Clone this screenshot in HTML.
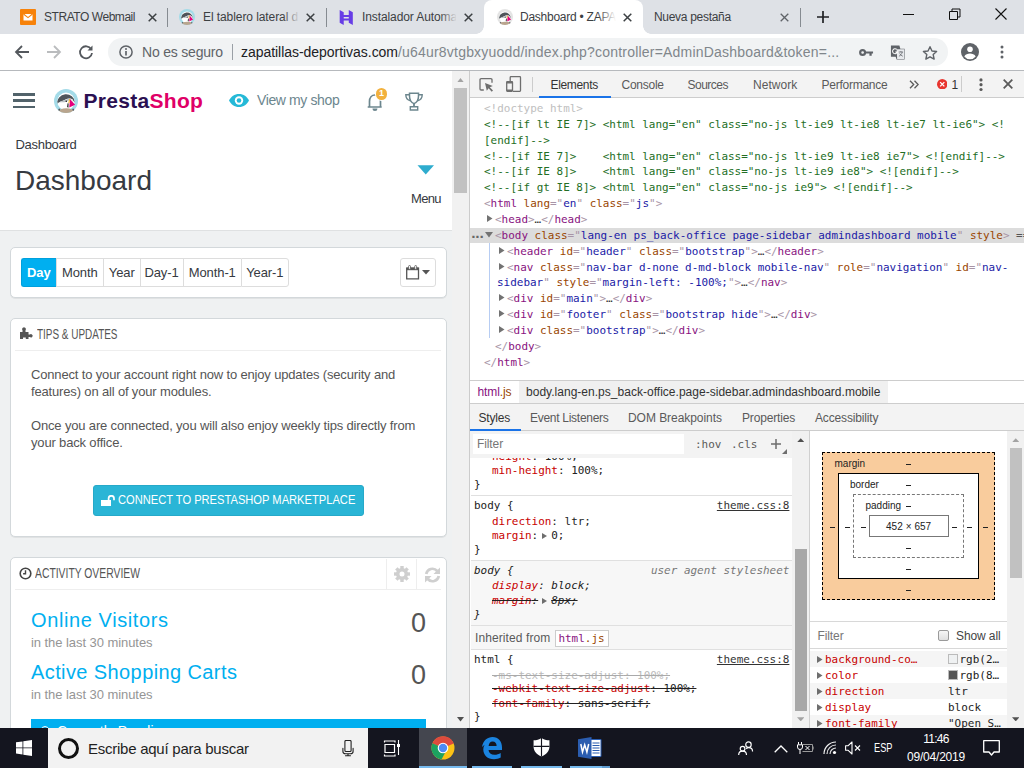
<!DOCTYPE html>
<html lang="es">
<head>
<meta charset="utf-8">
<title>Dashboard</title>
<style>
*{box-sizing:border-box;margin:0;padding:0}
html,body{width:1024px;height:768px;overflow:hidden;background:#fff}
body{font-family:"Liberation Sans",sans-serif;position:relative;color:#202124}
.abs{position:absolute}
#tabbar{position:absolute;left:0;top:0;width:1024px;height:34px;background:#dee1e6}
#toolbar{position:absolute;left:0;top:34px;width:1024px;height:37px;background:#fff;border-bottom:1px solid #b6b9bd}
#page{position:absolute;left:0;top:71px;width:452px;height:657px;background:#eff1f2;overflow:hidden}
#pscroll{position:absolute;left:452px;top:71px;width:17px;height:657px;background:#f1f1f1}
#dev{position:absolute;left:469px;top:71px;width:555px;height:657px;background:#fff;overflow:hidden;border-left:1px solid #ccc}
#devin{position:absolute;left:1px;top:0;width:553px;height:657px}
#taskbar{position:absolute;left:0;top:728px;width:1024px;height:40px;background:#101a27}
.tabtxt{position:absolute;top:9px;font-size:12px;color:#3c4043;white-space:nowrap;overflow:hidden;height:18px;line-height:16px}

.panel{position:absolute;left:10px;width:437px;background:#fff;border:1px solid #d3d8db;border-radius:5px;box-shadow:0 1px 0 rgba(0,0,0,.06)}
.btng{height:29px;white-space:nowrap;font-size:0}
.btng .b{display:inline-block;height:29px;line-height:27px;font-size:13px;text-align:center;color:#363a41;background:#fff;border:1px solid #ddd;border-right:none;vertical-align:top;letter-spacing:-0.1px}
.btng .b.act{background:#00aff0;border-color:#00a0dc;color:#fff;font-weight:700;border-radius:3px 0 0 3px}
.phead{font-size:14px;line-height:22px;color:#555;white-space:nowrap;transform:scaleX(0.71);transform-origin:0 0}
.ptxt{font-size:13px;line-height:17px;color:#555;white-space:nowrap;letter-spacing:-0.16px}
.big{font-size:20px;line-height:26px;color:#00aff0;white-space:nowrap}
.sub{font-size:13px;line-height:16px;color:#959595;white-space:nowrap;letter-spacing:-0.06px}
.num{width:46px;text-align:right;font-size:27px;line-height:32px;color:#555}

.dtab{position:absolute;top:6px;font-size:12px;line-height:16px;color:#5a5a5a;white-space:nowrap}
.ui{font-size:12px;line-height:16px;color:#5a5a5a;white-space:nowrap}
.ln,.ln *,.sl,.sl *{font-family:"DejaVu Sans Mono","Liberation Mono",monospace}
.ln{position:absolute;margin-top:1px;font-size:10.960px;line-height:15.850px;height:15.850px;white-space:pre;color:#303030}
.p{color:#a894a6}.t{color:#881280}.an{color:#994500}.av{color:#1a1aa6}.c{color:#236e25}.dt{color:#c0c0c0}

.sl{position:absolute;font-size:10.960px;line-height:15px;height:15px;white-space:pre;color:#222}
.sl.r{left:auto !important;right:2.600px;text-align:right}
.sl.it,.sl.it *{font-style:italic}
.lnk{text-decoration:underline;color:#333}
.pn{color:#c80000}
.pl.st{text-decoration:line-through;text-decoration-color:#222}
.pl.gr,.pl.gr .pn{color:#bbb;text-decoration-color:#aaa}
.tri{display:inline-block;width:0;height:0;border-left:5px solid #6e6e6e;border-top:3.500px solid transparent;border-bottom:3.500px solid transparent;margin:0 4px 0 4px;vertical-align:0}

.bm{font-size:10px;line-height:14px;color:#222;white-space:nowrap}
.sw{display:inline-block;width:10px;height:10px;border:1px solid #bbb;margin-right:1.500px;vertical-align:-1px}
.tb{font-size:12px;line-height:16px;color:#fff;white-space:nowrap}
#taskbar{background:#14151f !important}
</style>
</head>
<body>
<div id="tabbar">
<!-- tab 1 -->
<svg class="abs" style="left:20px;top:9px" width="16" height="16" viewBox="0 0 16 16"><rect width="16" height="16" rx="1" fill="#f7820a"/><path d="M3.5 5h9v6.5h-9z" fill="#fff"/><path d="M3.5 5l4.5 3.6L12.500 5" fill="none" stroke="#f7820a" stroke-width="1.1"/></svg>
<div class="tabtxt" style="left:44px;width:96px;letter-spacing:-0.45px">STRATO Webmail</div>
<svg class="abs tx" style="left:148px;top:13px" width="9" height="9" viewBox="0 0 9 9"><path d="M.7.7l7.600 7.600M8.300.7L.7 8.300" stroke="#3c4043" stroke-width="1.500" fill="none"/></svg>
<div class="abs" style="left:167px;top:8px;width:1px;height:19px;background:#868b91"></div>
<!-- tab 2 -->
<svg class="abs" style="left:179px;top:9px" width="16" height="16" viewBox="0 0 24 24"><defs><clipPath id="lgoa"><circle cx="12" cy="12" r="12"/></clipPath><clipPath id="lgia"><circle cx="12" cy="12.300" r="8.700"/></clipPath></defs><circle cx="12" cy="12" r="12" fill="#a4dbe8"/><g clip-path="url(#lgia)"><rect x="0" y="0" width="24" height="24" fill="#fff"/><path d="M3 15A8.700 8.700 0 0 1 21 13.500L17 9.800C14.500 9 12.500 10 11 10.800 8.500 12.300 6 12 3 15z" fill="#4f555a"/><path d="M5 13.500c2-1.800 5-1.500 7.500-3 1.500-.9 3-1 4-.5l.5 1.500c-2-.3-3.500.3-5 1.200-2 1.100-4.500.3-7 .8z" fill="#b9c0c4"/><path d="M16.500 9.500l2.500 1 .5 3-2-1z" fill="#e9ecee"/></g><ellipse cx="12.200" cy="22.300" rx="7.600" ry="3" fill="#b9a58e" clip-path="url(#lgoa)"/><path d="M5 19.500l1.300.6-1 1.800-1.200-.8zM19.400 19.500l-1.300.6 1 1.800 1.200-.8z" fill="#4f555a"/><path d="M15.900 9.900L21.100 15.800 15.300 18.600z" fill="#e5007d"/><path d="M15.200 9.900l1 .2-.9 4.200-1-.4z" fill="#fbbb22"/><path d="M13.600 14.200l1 .3-.2 4.300-1.300-.7z" fill="#1a1a1a"/><circle cx="12.300" cy="12.300" r=".8" fill="#1a1a1a"/></svg>
<div class="tabtxt" style="left:203px;width:96px;letter-spacing:-0.08px">El tablero lateral d</div>
<div class="abs" style="left:283px;top:6px;width:17px;height:22px;background:linear-gradient(90deg,rgba(222,225,230,0),#dee1e6)"></div>
<svg class="abs tx" style="left:306px;top:13px" width="9" height="9" viewBox="0 0 9 9"><path d="M.7.7l7.600 7.600M8.300.7L.7 8.300" stroke="#3c4043" stroke-width="1.500" fill="none"/></svg>
<div class="abs" style="left:326px;top:8px;width:1px;height:19px;background:#868b91"></div>
<!-- tab 3 -->
<svg class="abs" style="left:339px;top:9.500px" width="14.500" height="15" viewBox="0 0 14 16"><path d="M0 0l4.300 2.300V16L0 13.700zM14 16l-4.300-2.300V0L14 2.300zM4.300 5.300h5.400v2.200H4.300zM4.300 9h5.400v2.200H4.300z" fill="#673de6"/></svg>
<div class="tabtxt" style="left:362px;width:94px;letter-spacing:-0.1px">Instalador Automa</div>
<div class="abs" style="left:440px;top:6px;width:17px;height:22px;background:linear-gradient(90deg,rgba(222,225,230,0),#dee1e6)"></div>
<svg class="abs tx" style="left:464px;top:13px" width="9" height="9" viewBox="0 0 9 9"><path d="M.7.7l7.600 7.600M8.300.7L.7 8.300" stroke="#3c4043" stroke-width="1.500" fill="none"/></svg>
<!-- active tab -->
<div class="abs" style="left:484px;top:0;width:159px;height:34px;background:#fff;border-radius:8px 8px 0 0"></div>
<div class="abs" style="left:476px;top:26px;width:8px;height:8px;background:radial-gradient(circle at 0 0,rgba(255,255,255,0) 7.500px,#fff 8px)"></div>
<div class="abs" style="left:643px;top:26px;width:8px;height:8px;background:radial-gradient(circle at 100% 0,rgba(255,255,255,0) 7.500px,#fff 8px)"></div>
<svg class="abs" style="left:497px;top:9px" width="16" height="16" viewBox="0 0 24 24"><defs><clipPath id="lgob"><circle cx="12" cy="12" r="12"/></clipPath><clipPath id="lgib"><circle cx="12" cy="12.300" r="8.700"/></clipPath></defs><circle cx="12" cy="12" r="12" fill="#e4e4e4"/><g clip-path="url(#lgib)"><rect x="0" y="0" width="24" height="24" fill="#fff"/><path d="M3 15A8.700 8.700 0 0 1 21 13.500L17 9.800C14.500 9 12.500 10 11 10.800 8.500 12.300 6 12 3 15z" fill="#4f555a"/><path d="M5 13.500c2-1.800 5-1.500 7.500-3 1.500-.9 3-1 4-.5l.5 1.500c-2-.3-3.500.3-5 1.200-2 1.100-4.500.3-7 .8z" fill="#b9c0c4"/><path d="M16.500 9.500l2.500 1 .5 3-2-1z" fill="#e9ecee"/></g><ellipse cx="12.200" cy="22.300" rx="7.600" ry="3" fill="#b9a58e" clip-path="url(#lgob)"/><path d="M5 19.500l1.300.6-1 1.800-1.200-.8zM19.400 19.500l-1.300.6 1 1.800 1.200-.8z" fill="#4f555a"/><path d="M15.900 9.900L21.100 15.800 15.300 18.600z" fill="#e5007d"/><path d="M15.200 9.900l1 .2-.9 4.200-1-.4z" fill="#fbbb22"/><path d="M13.600 14.200l1 .3-.2 4.300-1.300-.7z" fill="#1a1a1a"/><circle cx="12.300" cy="12.300" r=".8" fill="#1a1a1a"/></svg>
<div class="tabtxt" style="left:520px;width:96px;letter-spacing:-0.25px;color:#3c4043">Dashboard • ZAPA</div>
<div class="abs" style="left:598px;top:6px;width:18px;height:22px;background:linear-gradient(90deg,rgba(255,255,255,0),#fff)"></div>
<svg class="abs tx" style="left:623px;top:13px" width="9" height="9" viewBox="0 0 9 9"><path d="M.7.7l7.600 7.600M8.300.7L.7 8.300" stroke="#3c4043" stroke-width="1.500" fill="none"/></svg>
<!-- tab 5 -->
<div class="tabtxt" style="left:654px;width:110px;letter-spacing:-0.3px">Nueva pestaña</div>
<svg class="abs tx" style="left:780px;top:13px" width="9" height="9" viewBox="0 0 9 9"><path d="M.7.7l7.600 7.600M8.300.7L.7 8.300" stroke="#5f6368" stroke-width="1.300" fill="none"/></svg>
<div class="abs" style="left:800px;top:8px;width:1px;height:19px;background:#868b91"></div>
<svg class="abs" style="left:817px;top:11px" width="12" height="12" viewBox="0 0 12 12"><path d="M6 0v12M0 6h12" stroke="#202124" stroke-width="1.700"/></svg>
<!-- window controls -->
<svg class="abs" style="left:903px;top:8px" width="12" height="12" viewBox="0 0 12 12"><path d="M0 6.500h11" stroke="#111" stroke-width="1"/></svg>
<svg class="abs" style="left:949px;top:8px" width="12" height="12" viewBox="0 0 12 12"><path d="M.5 3.500h8v8h-8zM3 3.500V1h8v8H8.500" fill="none" stroke="#111" stroke-width="1"/></svg>
<svg class="abs" style="left:995px;top:8px" width="12" height="12" viewBox="0 0 12 12"><path d="M.5.5l11 11M11.500.5l-11 11" stroke="#111" stroke-width="1.100"/></svg>
</div>
<div id="toolbar">
<svg class="abs" style="left:14px;top:10px" width="16" height="16" viewBox="0 0 16 16"><path d="M15 8H2.500M8 2L2 8l6 6" fill="none" stroke="#54585d" stroke-width="1.800"/></svg>
<svg class="abs" style="left:46px;top:10px" width="16" height="16" viewBox="0 0 16 16"><path d="M1 8h12.500M8 2l6 6-6 6" fill="none" stroke="#babcbe" stroke-width="1.800"/></svg>
<svg class="abs" style="left:78px;top:10px" width="16" height="16" viewBox="0 0 16 16"><path d="M13.200 5.200A6 6 0 1 0 14 9" fill="none" stroke="#54585d" stroke-width="1.800"/><path d="M14.500 1.500v5h-5z" fill="#54585d"/></svg>
<div class="abs" style="left:108px;top:4px;width:840px;height:28px;border-radius:14px;background:#f1f3f4"></div>
<svg class="abs" style="left:118.800px;top:11px" width="14" height="14" viewBox="0 0 14 14"><circle cx="7" cy="7" r="6.100" fill="none" stroke="#5f6368" stroke-width="1.500"/><path d="M7 6v4.600" stroke="#5f6368" stroke-width="1.700"/><circle cx="7" cy="3.900" r="1" fill="#5f6368"/></svg>
<div class="abs" style="left:142px;top:9px;font-size:14px;line-height:18px;color:#5f6368;letter-spacing:-0.2px;white-space:nowrap">No es seguro</div>
<div class="abs" style="left:232px;top:10px;width:1px;height:16px;background:#9aa0a6"></div>
<div class="abs" style="left:241px;top:9px;font-size:14px;line-height:18px;color:#202124;white-space:nowrap;letter-spacing:-0.04px">zapatillas-deportivas.com<span style="color:#80868b;letter-spacing:0.2px">/u64ur8vtgbxyuodd/index.php?controller=AdminDashboard&amp;token=...</span></div>
<!-- key -->
<svg class="abs" style="left:859px;top:12.500px" width="14.500" height="11" viewBox="0 0 16 12"><circle cx="4" cy="6" r="2.700" fill="none" stroke="#5f6368" stroke-width="2.400"/><path d="M7 4.800h8.500v2.400H14V9.500h-2.500V7.200H7z" fill="#5f6368"/></svg>
<!-- translate -->
<svg class="abs" style="left:889.500px;top:10px" width="16" height="17" viewBox="0 0 17 17"><path d="M1 1h9l1 3.500H15.500V16H7l-1-3H1z" fill="#5f6368"/><path d="M7 5h8v10.500H7.600z" fill="#e8eaed"/><path d="M7.200 5.300A2.600 2.600 0 1 0 7.800 8H5.600" fill="none" stroke="#fff" stroke-width="1.100"/><path d="M9.300 8h4.600M11.600 7v1M13 8c-.4 2-1.800 3.600-3.500 4.500M10.200 9.500c.7 1.300 1.800 2.300 3.400 3" fill="none" stroke="#5f6368" stroke-width=".8"/></svg>
<!-- star -->
<svg class="abs" style="left:922px;top:10.500px" width="16" height="16" viewBox="0 0 17 17"><path d="M8.500 1.800l2.100 4.500 4.900.6-3.600 3.300 1 4.800-4.400-2.500-4.400 2.500 1-4.800L1.500 6.900l4.900-.6z" fill="none" stroke="#5f6368" stroke-width="1.500" stroke-linejoin="round"/></svg>
<!-- profile -->
<svg class="abs" style="left:961px;top:9px" width="18" height="18" viewBox="0 0 18 18"><circle cx="9" cy="9" r="9" fill="#5f6368"/><circle cx="9" cy="6.300" r="2.800" fill="#fff"/><path d="M3.300 13.500c1-2.200 3.500-3 5.700-3s4.700.8 5.700 3A7.300 7.300 0 0 1 9 16.300a7.300 7.300 0 0 1-5.700-2.800z" fill="#fff"/></svg>
<svg class="abs" style="left:1000px;top:11px" width="4" height="14" viewBox="0 0 4 14"><circle cx="2" cy="2" r="1.500" fill="#5f6368"/><circle cx="2" cy="7" r="1.500" fill="#5f6368"/><circle cx="2" cy="12" r="1.500" fill="#5f6368"/></svg>
</div>
<div id="page">
<!-- header + page head (white) -->
<div class="abs" style="left:0;top:0;width:453px;height:160px;background:#fff;border-bottom:1px solid #dfe1e2"></div>
<div class="abs" style="left:13px;top:22px;width:22px;height:2.500px;background:#52636b"></div>
<div class="abs" style="left:13px;top:28.250px;width:22px;height:2.500px;background:#52636b"></div>
<div class="abs" style="left:13px;top:34.500px;width:22px;height:2.500px;background:#52636b"></div>
<svg class="abs" style="left:54.200px;top:18px" width="24" height="24" viewBox="0 0 24 24"><defs><clipPath id="lgo"><circle cx="12" cy="12" r="12"/></clipPath><clipPath id="lgi"><circle cx="12" cy="12.300" r="8.700"/></clipPath></defs><circle cx="12" cy="12" r="12" fill="#a4dbe8"/><g clip-path="url(#lgi)"><rect x="0" y="0" width="24" height="24" fill="#fff"/><path d="M3 15A8.700 8.700 0 0 1 21 13.500L17 9.800C14.500 9 12.500 10 11 10.800 8.500 12.300 6 12 3 15z" fill="#4f555a"/><path d="M5 13.500c2-1.800 5-1.500 7.500-3 1.500-.9 3-1 4-.5l.5 1.500c-2-.3-3.500.3-5 1.200-2 1.100-4.500.3-7 .8z" fill="#b9c0c4"/><path d="M16.500 9.500l2.500 1 .5 3-2-1z" fill="#e9ecee"/></g><ellipse cx="12.200" cy="22.300" rx="7.600" ry="3" fill="#b9a58e" clip-path="url(#lgo)"/><path d="M5 19.500l1.300.6-1 1.800-1.200-.8zM19.400 19.500l-1.300.6 1 1.800 1.200-.8z" fill="#4f555a"/><path d="M15.900 9.900L21.100 15.800 15.300 18.600z" fill="#e5007d"/><path d="M15.200 9.900l1 .2-.9 4.200-1-.4z" fill="#fbbb22"/><path d="M13.600 14.200l1 .3-.2 4.300-1.300-.7z" fill="#1a1a1a"/><circle cx="12.300" cy="12.300" r=".8" fill="#1a1a1a"/></svg>
<div class="abs" style="left:83.500px;top:17px;font-size:21px;line-height:26px;font-weight:700;color:#2b1052;letter-spacing:0.3px;white-space:nowrap">Presta<span style="color:#df0067">Shop</span></div>
<svg class="abs" style="left:229px;top:23px" width="20" height="13" viewBox="0 0 20 13"><path d="M10 0C5.500 0 1.800 2.700 0 6.500 1.800 10.300 5.500 13 10 13s8.200-2.700 10-6.500C18.200 2.700 14.500 0 10 0z" fill="#25b9d7"/><circle cx="10" cy="6.500" r="4.200" fill="#fff"/><circle cx="10" cy="6.500" r="2.300" fill="#25b9d7"/></svg>
<div class="abs" style="left:257px;top:20px;font-size:14px;line-height:18px;color:#6c868e;letter-spacing:-0.38px;white-space:nowrap">View my shop</div>
<svg class="abs" style="left:366px;top:21px" width="18" height="20" viewBox="0 0 18 20"><path d="M1.700 15h14M3.500 14.800V9.500C3.500 5.500 5.800 3 9 3s5.500 2.500 5.500 6.500V14.800" fill="none" stroke="#6c868e" stroke-width="1.700" stroke-linejoin="round"/><path d="M6.500 16.600a2.500 2.500 0 0 0 5 0z" fill="#6c868e"/></svg>
<div class="abs" style="left:375.800px;top:17.300px;width:11.400px;height:11.400px;border-radius:6px;background:#f2b13e;box-shadow:0 0 0 1px #fff;color:#fff;font-size:9px;font-weight:700;line-height:11.400px;text-align:center">1</div>
<svg class="abs" style="left:404px;top:21px" width="20" height="19" viewBox="0 0 20 19"><path d="M5.500 1.200h9V4c0 4-2 6.700-4.500 7.600C7.500 10.700 5.500 8 5.500 4z" fill="none" stroke="#6c868e" stroke-width="1.500"/><path d="M5.500 2.700H1.800c0 3 1.500 5.300 4.700 6M14.500 2.700h3.700c0 3-1.500 5.300-4.700 6" fill="none" stroke="#6c868e" stroke-width="1.400"/><path d="M10 11.500v3.300" stroke="#6c868e" stroke-width="1.800"/><path d="M6.300 14.700h7.400v3.300H6.300z" fill="none" stroke="#6c868e" stroke-width="1.400"/></svg>
<div class="abs" style="left:15.500px;top:65px;font-size:13px;line-height:18px;color:#363a41;letter-spacing:-0.3px;white-space:nowrap">Dashboard</div>
<div class="abs" style="left:15px;top:91.500px;font-size:28px;line-height:36px;color:#363a41;white-space:nowrap">Dashboard</div>
<svg class="abs" style="left:417px;top:94px" width="18" height="10" viewBox="0 0 18 10"><path d="M.5.300h16.500L8.750 9.600z" fill="#2eacce"/></svg>
<div class="abs" style="left:411px;top:119px;font-size:13px;line-height:18px;color:#363a41;letter-spacing:-0.7px;white-space:nowrap">Menu</div>
<!-- calendar panel -->
<div class="panel" style="top:176px;height:51px"></div>
<div class="abs btng" style="left:21px;top:187px">
<span class="b act" style="width:34.500px">Day</span><span class="b" style="width:47.500px">Month</span><span class="b" style="width:36.500px">Year</span><span class="b" style="width:43px">Day-1</span><span class="b" style="width:58.500px">Month-1</span><span class="b" style="width:47.500px;border-right:1px solid #ddd;border-radius:0 3px 3px 0">Year-1</span>
</div>
<div class="abs" style="left:400px;top:187px;width:36px;height:29px;border:1px solid #ddd;border-radius:3px;background:#fff"></div>
<svg class="abs" style="left:406px;top:193.500px" width="14" height="15" viewBox="0 0 14 15"><path d="M.7 3.200h11.800v10.600H.7z" fill="#fff" stroke="#555" stroke-width="1.300"/><path d="M.5 2.600h12.200v2.600H.5z" fill="#555"/><rect x="2.600" y=".5" width="1.900" height="3.800" rx=".9" fill="#fff" stroke="#555" stroke-width=".8"/><rect x="8.700" y=".5" width="1.900" height="3.800" rx=".9" fill="#fff" stroke="#555" stroke-width=".8"/></svg>
<svg class="abs" style="left:422px;top:199px" width="8" height="4.500" viewBox="0 0 8 4.500"><path d="M0 0h8L4 4.500z" fill="#555"/></svg>
<!-- tips panel -->
<div class="panel" style="top:247px;height:219px"></div>
<svg class="abs" style="left:20px;top:255.500px" width="13" height="12" viewBox="0 0 13 12"><path d="M0 12V5h2.500V3.200a1.800 1.800 0 1 1 3 0V5H8.500v2.500h1.300a1.700 1.700 0 1 1 0 2.600H8.500V12H5.800V10.500H3V12z" fill="#555"/></svg>
<div class="abs phead" style="left:36.500px;top:252px">TIPS &amp; UPDATES</div>
<div class="abs" style="left:15px;top:279px;width:426px;height:1px;background:#eee"></div>
<div class="abs ptxt" style="left:31px;top:295px">Connect to your account right now to enjoy updates (security and<br>features) on all of your modules.</div>
<div class="abs ptxt" style="left:31px;top:346px">Once you are connected, you will also enjoy weekly tips directly from<br>your back office.</div>
<div class="abs" style="left:93px;top:414px;width:271px;height:31px;border-radius:3px;background:#2ab5d6;border:1px solid #26a9c9"></div>
<svg class="abs" style="left:101px;top:423.500px" width="14" height="11.500" viewBox="0 0 14 11.500"><path d="M0 5h10v6.500H0z" fill="#fff"/><path d="M7.600 5.200V3.500a2.700 2.700 0 0 1 5.400 0V5.200" fill="none" stroke="#fff" stroke-width="1.700"/></svg>
<div class="abs" style="left:118px;top:420px;font-size:13px;line-height:18px;color:#fff;white-space:nowrap;transform:scaleX(0.857);transform-origin:0 0">CONNECT TO PRESTASHOP MARKETPLACE</div>
<!-- activity panel -->
<div class="panel" style="top:486px;height:200px"></div>
<svg class="abs" style="left:19.400px;top:495.800px" width="13" height="13" viewBox="0 0 12 12"><circle cx="6" cy="6" r="4.900" fill="none" stroke="#444" stroke-width="1.500"/><path d="M6 3v3.300H3.800" fill="none" stroke="#444" stroke-width="1.300"/></svg>
<div class="abs phead" style="left:35px;top:491px;transform:scaleX(0.74)">ACTIVITY OVERVIEW</div>
<div class="abs" style="left:15px;top:518px;width:426px;height:1px;background:#eee"></div>
<div class="abs" style="left:386px;top:488px;width:1px;height:30px;background:#eee"></div>
<div class="abs" style="left:416px;top:488px;width:1px;height:30px;background:#eee"></div>
<svg class="abs" style="left:394px;top:495px" width="16" height="16" viewBox="0 0 16 16"><g fill="#cfcfcf"><rect x="6.300" y="0" width="3.400" height="4" transform="rotate(0 8 8)"/><rect x="6.300" y="0" width="3.400" height="4" transform="rotate(45 8 8)"/><rect x="6.300" y="0" width="3.400" height="4" transform="rotate(90 8 8)"/><rect x="6.300" y="0" width="3.400" height="4" transform="rotate(135 8 8)"/><rect x="6.300" y="0" width="3.400" height="4" transform="rotate(180 8 8)"/><rect x="6.300" y="0" width="3.400" height="4" transform="rotate(225 8 8)"/><rect x="6.300" y="0" width="3.400" height="4" transform="rotate(270 8 8)"/><rect x="6.300" y="0" width="3.400" height="4" transform="rotate(315 8 8)"/></g><circle cx="8" cy="8" r="4.300" fill="none" stroke="#cfcfcf" stroke-width="3.600"/></svg>
<svg class="abs" style="left:423.500px;top:495.500px" width="17" height="16" viewBox="0 0 17 16"><path d="M2.200 7A6.300 6.300 0 0 1 13.200 4M14.800 9A6.300 6.300 0 0 1 3.800 12" fill="none" stroke="#cfcfcf" stroke-width="2.700"/><path d="M16 .5V7H9.500zM1 15.500V9h6.500z" fill="#cfcfcf"/></svg>
<div class="abs big" style="left:31px;top:536px;letter-spacing:0.6px">Online Visitors</div>
<div class="abs sub" style="left:31px;top:564px">in the last 30 minutes</div>
<div class="abs num" style="left:380px;top:535.500px">0</div>
<div class="abs big" style="left:31px;top:588px;letter-spacing:0.4px">Active Shopping Carts</div>
<div class="abs sub" style="left:31px;top:616px">in the last 30 minutes</div>
<div class="abs num" style="left:380px;top:587.500px">0</div>
<div class="abs" style="left:31px;top:648px;width:395px;height:30px;background:#00aff0;overflow:hidden"><div class="abs" style="left:10px;top:6.500px;width:8px;height:8px;border:1.500px solid #fff;border-radius:4px"></div><div class="abs" style="left:26px;top:5.400px;font-size:14px;line-height:14px;color:#fff;white-space:nowrap">Currently Pending</div></div>
</div>
<div id="pscroll">
<svg class="abs" style="left:5px;top:6.500px" width="7" height="4.500" viewBox="0 0 7 4.500"><path d="M0 4.500L3.500 0 7 4.500z" fill="#a3a3a3"/></svg>
<div class="abs" style="left:2px;top:17px;width:13px;height:105px;background:#c1c1c1"></div>
<svg class="abs" style="left:5px;top:646px" width="7" height="4.500" viewBox="0 0 7 4.500"><path d="M0 0L3.500 4.500 7 0z" fill="#505050"/></svg>
</div>
<div id="dev"><div id="devin">
<!-- toolbar -->
<div class="abs" style="left:-1px;top:0;width:555px;height:27px;background:#f3f3f3;border-bottom:1px solid #cdcdcd"></div>
<svg class="abs" style="left:8px;top:7px" width="15" height="14" viewBox="0 0 15 14"><path d="M13 4.700V1.800Q13 .700 11.900 .700H2.100Q1 .700 1 1.800V10.900Q1 12 2.100 12H4.800" fill="none" stroke="#6e6e6e" stroke-width="1.300"/><path d="M6 5l7.800 3-3 1.200 3.200 3.400-1.300 1.200-3.100-3.500-1.800 2.400z" fill="#6e6e6e"/></svg>
<svg class="abs" style="left:35px;top:5px" width="16" height="16" viewBox="0 0 16 16"><path d="M4.200 5V1.400Q4.200 .700 4.900 .700H13.800Q14.500 .700 14.500 1.400V14.600Q14.500 15.300 13.800 15.300H7" fill="none" stroke="#6e6e6e" stroke-width="1.300"/><rect x=".700" y="5.600" width="5.800" height="9.700" rx=".7" fill="none" stroke="#6e6e6e" stroke-width="1.300"/><path d="M.7 6.500h5.800M.7 14.300h5.800" stroke="#6e6e6e" stroke-width="1.800"/></svg>
<div class="abs" style="left:61px;top:6px;width:1px;height:15px;background:#ccc"></div>
<div class="dtab" style="left:79.500px;color:#333;letter-spacing:-0.34px">Elements</div>
<div class="abs" style="left:68px;top:25px;width:72px;height:2px;background:#1a73e8"></div>
<div class="dtab" style="left:150.500px;letter-spacing:-0.26px">Console</div>
<div class="dtab" style="left:216.500px;letter-spacing:-0.5px">Sources</div>
<div class="dtab" style="left:282px;letter-spacing:0.03px">Network</div>
<div class="dtab" style="left:350.500px;letter-spacing:-0.25px">Performance</div>
<svg class="abs" style="left:437.500px;top:9px" width="10" height="9" viewBox="0 0 10 9"><path d="M1 .7l3.700 3.800L1 8.300M5.500.7l3.700 3.800-3.700 3.800" fill="none" stroke="#5a5a5a" stroke-width="1.300"/></svg>
<svg class="abs" style="left:465.800px;top:7.600px" width="10.500" height="10.500" viewBox="0 0 11 11"><circle cx="5.500" cy="5.500" r="5.500" fill="#e8352f"/><path d="M3.300 3.300l4.400 4.400M7.700 3.300L3.300 7.700" stroke="#fff" stroke-width="1.400"/></svg>
<div class="dtab" style="left:480.500px;color:#333">1</div>
<div class="abs" style="left:490px;top:5px;width:1px;height:16px;background:#ccc"></div>
<svg class="abs" style="left:507.500px;top:6px" width="4" height="15" viewBox="0 0 4 15"><circle cx="2" cy="2.900" r="1.600" fill="#5a5a5a"/><circle cx="2" cy="7.700" r="1.600" fill="#5a5a5a"/><circle cx="2" cy="12.500" r="1.600" fill="#5a5a5a"/></svg>
<svg class="abs" style="left:532px;top:8px" width="10" height="10" viewBox="0 0 10 10"><path d="M.7.700l8.600 8.600M9.300.700L.7 9.300" stroke="#5a5a5a" stroke-width="1.800"/></svg>
<!-- elements tree -->
<div class="mono">
<div class="ln" style="left:13px;top:29.0px"><span class="dt">&lt;!doctype html&gt;</span></div>
<div class="ln" style="left:13px;top:44.85px"><span class="c">&lt;!--[if lt IE 7]&gt; &lt;html lang="en" class="no-js lt-ie9 lt-ie8 lt-ie7 lt-ie6"&gt; &lt;!</span></div>
<div class="ln" style="left:13px;top:60.7px"><span class="c">[endif]--&gt;</span></div>
<div class="ln" style="left:13px;top:76.55px"><span class="c">&lt;!--[if IE 7]&gt;    &lt;html lang="en" class="no-js lt-ie9 lt-ie8 ie7"&gt; &lt;![endif]--&gt;</span></div>
<div class="ln" style="left:13px;top:92.4px"><span class="c">&lt;!--[if IE 8]&gt;    &lt;html lang="en" class="no-js lt-ie9 ie8"&gt; &lt;![endif]--&gt;</span></div>
<div class="ln" style="left:13px;top:108.25px"><span class="c">&lt;!--[if gt IE 8]&gt; &lt;html lang="en" class="no-js ie9"&gt; &lt;![endif]--&gt;</span></div>
<div class="ln" style="left:13px;top:124.1px"><span class="p">&lt;</span><span class="t">html</span> <span class="an">lang</span><span class="p">="</span><span class="av">en</span><span class="p">"</span> <span class="an">class</span><span class="p">="</span><span class="av">js</span><span class="p">"</span><span class="p">&gt;</span></div>
<svg class="abs" style="left:16px;top:143.95px" width="6" height="7" viewBox="0 0 6 7"><path d="M0 0l5.500 3.500L0 7z" fill="#727272"/></svg>
<div class="ln" style="left:24px;top:139.95px"><span class="p">&lt;</span><span class="t">head</span><span class="p">&gt;</span>…<span class="p">&lt;/</span><span class="t">head</span><span class="p">&gt;</span></div>
<div class="abs" style="left:-1px;top:157.2px;width:555px;height:14.800px;background:#dcdcdc"></div>
<div class="abs" style="left:17.500px;top:171.65px;width:1px;height:95.1px;background:#b7cdf3"></div>
<div class="ln" style="left:1px;top:155.8px"><span style="color:#666;letter-spacing:-3.700px;font-weight:700;font-size:13px;position:relative;top:-2.200px;left:-2.600px">...</span></div>
<svg class="abs" style="left:14px;top:160.8px" width="8" height="6" viewBox="0 0 8 6"><path d="M0 0h8L4 5.500z" fill="#727272"/></svg>
<div class="ln" style="left:24px;top:155.8px"><span class="p">&lt;</span><span class="t">body</span> <span class="an">class</span><span class="p">="</span><span class="av">lang-en ps_back-office page-sidebar admindashboard mobile</span><span class="p">"</span> <span class="an">style</span><span class="p">&gt;</span> <span style="color:#555">== $0</span></div>
<svg class="abs" style="left:28px;top:175.65px" width="6" height="7" viewBox="0 0 6 7"><path d="M0 0l5.500 3.500L0 7z" fill="#727272"/></svg>
<div class="ln" style="left:36px;top:171.65px"><span class="p">&lt;</span><span class="t">header</span> <span class="an">id</span><span class="p">="</span><span class="av">header</span><span class="p">"</span> <span class="an">class</span><span class="p">="</span><span class="av">bootstrap</span><span class="p">"</span><span class="p">&gt;</span>…<span class="p">&lt;/</span><span class="t">header</span><span class="p">&gt;</span></div>
<svg class="abs" style="left:28px;top:191.5px" width="6" height="7" viewBox="0 0 6 7"><path d="M0 0l5.500 3.500L0 7z" fill="#727272"/></svg>
<div class="ln" style="left:36px;top:187.5px"><span class="p">&lt;</span><span class="t">nav</span> <span class="an">class</span><span class="p">="</span><span class="av">nav-bar d-none d-md-block mobile-nav</span><span class="p">"</span> <span class="an">role</span><span class="p">="</span><span class="av">navigation</span><span class="p">"</span> <span class="an">id</span><span class="p">="</span><span class="av">nav-</span></div>
<div class="ln" style="left:26px;top:203.35px"><span class="av">sidebar</span><span class="p">"</span> <span class="an">style</span><span class="p">="</span><span class="av">margin-left: -100%;</span><span class="p">"&gt;</span>…<span class="p">&lt;/</span><span class="t">nav</span><span class="p">&gt;</span></div>
<svg class="abs" style="left:28px;top:223.2px" width="6" height="7" viewBox="0 0 6 7"><path d="M0 0l5.500 3.500L0 7z" fill="#727272"/></svg>
<div class="ln" style="left:36px;top:219.2px"><span class="p">&lt;</span><span class="t">div</span> <span class="an">id</span><span class="p">="</span><span class="av">main</span><span class="p">"</span><span class="p">&gt;</span>…<span class="p">&lt;/</span><span class="t">div</span><span class="p">&gt;</span></div>
<svg class="abs" style="left:28px;top:239.05px" width="6" height="7" viewBox="0 0 6 7"><path d="M0 0l5.500 3.500L0 7z" fill="#727272"/></svg>
<div class="ln" style="left:36px;top:235.05px"><span class="p">&lt;</span><span class="t">div</span> <span class="an">id</span><span class="p">="</span><span class="av">footer</span><span class="p">"</span> <span class="an">class</span><span class="p">="</span><span class="av">bootstrap hide</span><span class="p">"</span><span class="p">&gt;</span>…<span class="p">&lt;/</span><span class="t">div</span><span class="p">&gt;</span></div>
<svg class="abs" style="left:28px;top:254.9px" width="6" height="7" viewBox="0 0 6 7"><path d="M0 0l5.500 3.500L0 7z" fill="#727272"/></svg>
<div class="ln" style="left:36px;top:250.9px"><span class="p">&lt;</span><span class="t">div</span> <span class="an">class</span><span class="p">="</span><span class="av">bootstrap</span><span class="p">"</span><span class="p">&gt;</span>…<span class="p">&lt;/</span><span class="t">div</span><span class="p">&gt;</span></div>
<div class="ln" style="left:24px;top:266.75px"><span class="p">&lt;/</span><span class="t">body</span><span class="p">&gt;</span></div>
<div class="ln" style="left:13px;top:282.6px"><span class="p">&lt;/</span><span class="t">html</span><span class="p">&gt;</span></div>
</div>
<!-- breadcrumbs -->
<div class="abs" style="left:-1px;top:309px;width:555px;height:24px;background:#fff;border-top:1px solid #cdcdcd;border-bottom:1px solid #cdcdcd"></div>
<div class="abs" style="left:48px;top:310px;width:369px;height:22px;background:#f0f0f0"></div>
<div class="abs ui" style="left:6.500px;top:313px;color:#881280;letter-spacing:-0.1px">html<span style="color:#994500">.js</span></div>
<div class="abs ui" style="left:55px;top:313px;color:#333;letter-spacing:0.02px">body.lang-en.ps_back-office.page-sidebar.admindashboard.mobile</div>
<!-- styles tabs -->
<div class="abs" style="left:-1px;top:333px;width:555px;height:27px;background:#f3f3f3;border-bottom:1px solid #cdcdcd"></div>
<div class="abs ui" style="left:7.500px;top:339px;color:#333;letter-spacing:-0.2px">Styles</div>
<div class="abs" style="left:-1px;top:357.500px;width:50.500px;height:2px;background:#1a73e8"></div>
<div class="abs ui" style="left:59px;top:339px;letter-spacing:-0.28px">Event Listeners</div>
<div class="abs ui" style="left:157px;top:339px;letter-spacing:-0.05px">DOM Breakpoints</div>
<div class="abs ui" style="left:271px;top:339px;letter-spacing:-0.15px">Properties</div>
<div class="abs ui" style="left:344px;top:339px;letter-spacing:-0.15px">Accessibility</div>
<div id="styles" class="mono">
<div class="abs" style="left:-1px;top:360px;width:322px;height:26.500px;background:#f3f3f3"></div>
<div class="abs" style="left:2px;top:363px;width:211px;height:20px;background:#fff"></div>
<div class="abs ui" style="left:6px;top:365px;color:#767676;letter-spacing:-0.1px">Filter</div>
<div class="abs sl" style="left:224px;top:365.5px;color:#5a5a5a">:hov</div>
<div class="abs sl" style="left:260px;top:365.5px;color:#5a5a5a">.cls</div>
<svg class="abs" style="left:300px;top:368px" width="17" height="16" viewBox="0 0 17 16"><path d="M5 0v10M0 5h10" stroke="#6e6e6e" stroke-width="1.500"/><path d="M16 10v5h-5z" fill="#6e6e6e"/></svg>
<div class="abs" style="left:0;top:386.5px;width:321px;height:271px;overflow:hidden">
<div class="sl" style="left:21px;top:-8.6px"><span class="pl"><span class="pn">height</span>: 100%;</span></div>
<div class="sl" style="left:21px;top:5.4px"><span class="pl"><span class="pn">min-height</span>: 100%;</span></div>
<div class="sl" style="left:3px;top:19.7px">}</div>
<div class="abs" style="left:0;top:37.5px;width:321px;height:1px;background:#e0e0e0"></div>
<div class="sl" style="left:3px;top:40.6px">body {</div>
<div class="sl r" style="left:-471px;top:40.6px"><span class="lnk">theme.css:8</span></div>
<div class="sl" style="left:21px;top:56.2px"><span class="pl"><span class="pn">direction</span>: ltr;</span></div>
<div class="sl" style="left:21px;top:70.5px"><span class="pl"><span class="pn">margin</span>:<span class="tri"></span>0;</span></div>
<div class="sl" style="left:3px;top:84.4px">}</div>
<div class="abs" style="left:0;top:102.5px;width:321px;height:66px;background:#f7f7f7;border-top:1px solid #e0e0e0;border-bottom:1px solid #e0e0e0"></div>
<div class="sl it" style="left:3px;top:105.6px">body {</div>
<div class="sl r it" style="left:-471px;top:105.6px"><span style="color:#777">user agent stylesheet</span></div>
<div class="sl it" style="left:21px;top:120.9px"><span class="pl"><span class="pn">display</span>: block;</span></div>
<div class="sl it" style="left:21px;top:135.5px"><span class="pl st"><span class="pn">margin</span>:<span class="tri"></span>8px;</span></div>
<div class="sl it" style="left:3px;top:149.1px">}</div>
<div class="abs" style="left:0;top:168.5px;width:321px;height:24px;background:#f7f7f7;border-bottom:1px solid #e0e0e0"></div>
<div class="abs ui" style="left:4px;top:172.5px;color:#5a5a5a;letter-spacing:0.1px">Inherited from</div>
<div class="abs sl" style="left:83.5px;top:172.0px;width:54px;height:17px;line-height:15px;border:1px solid #ccc;background:#fff;text-align:center;color:#881280">html<span style="color:#994500">.js</span></div>
<div class="sl" style="left:3px;top:194.0px">html {</div>
<div class="sl r" style="left:-471px;top:194.0px"><span class="lnk">theme.css:8</span></div>
<div class="sl" style="left:21px;top:210.2px"><span class="pl st gr"><span class="pn">-ms-text-size-adjust</span>: 100%;</span></div>
<div class="sl" style="left:21px;top:223.8px"><span class="pl st"><span class="pn">-webkit-text-size-adjust</span>: 100%;</span></div>
<div class="sl" style="left:21px;top:238.4px"><span class="pl st"><span class="pn">font-family</span>: sans-serif;</span></div>
<div class="sl" style="left:3px;top:251.7px">}</div>
</div>
<!-- styles scrollbar -->
<div class="abs" style="left:321px;top:360px;width:17px;height:297px;background:#f1f1f1"></div>
<svg class="abs" style="left:325.750px;top:366.600px" width="7.500" height="4.500" viewBox="0 0 9 5"><path d="M0 5L4.500 0 9 5z" fill="#505050"/></svg>
<div class="abs" style="left:323.5px;top:478px;width:12px;height:162px;background:#a8a8a8"></div>
<svg class="abs" style="left:325.750px;top:645.500px" width="7.500" height="4.500" viewBox="0 0 9 5"><path d="M0 0L4.500 5 9 0z" fill="#a3a3a3"/></svg>
</div>
<div id="computed">
<div class="abs" style="left:338px;top:360px;width:215px;height:297px;background:#fff;border-left:1px solid #d0d0d0"></div>
<div class="abs" style="left:351px;top:381px;width:173px;height:148px;background:#f9cc9d;border:1px dashed #000"></div>
<div class="abs" style="left:367px;top:402px;width:141px;height:106px;background:#fff;border:1px solid #000"></div>
<div class="abs" style="left:382px;top:423px;width:111px;height:64px;background:#fff;border:1px dashed #777"></div>
<div class="abs" style="left:398px;top:444px;width:80px;height:22px;background:#fff;border:1px solid #777"></div>
<div class="abs bm" style="left:363.5px;top:385.5px">margin</div>
<div class="abs bm" style="left:379px;top:406.5px">border</div>
<div class="abs bm" style="left:394.5px;top:427.5px">padding</div>
<div class="abs bm" style="left:415px;top:448.5px;letter-spacing:0.05px">452 × 657</div>
<div class="abs" style="left:435.0px;top:392.5px;width:5px;height:1px;background:#222"></div>
<div class="abs" style="left:435.0px;top:413.5px;width:5px;height:1px;background:#222"></div>
<div class="abs" style="left:435.0px;top:434.5px;width:5px;height:1px;background:#222"></div>
<div class="abs" style="left:435.0px;top:477px;width:5px;height:1px;background:#222"></div>
<div class="abs" style="left:435.0px;top:498px;width:5px;height:1px;background:#222"></div>
<div class="abs" style="left:435.0px;top:519px;width:5px;height:1px;background:#222"></div>
<div class="abs" style="left:358.5px;top:456px;width:5px;height:1px;background:#222"></div>
<div class="abs" style="left:374.0px;top:456px;width:5px;height:1px;background:#222"></div>
<div class="abs" style="left:389.5px;top:456px;width:5px;height:1px;background:#222"></div>
<div class="abs" style="left:481.0px;top:456px;width:5px;height:1px;background:#222"></div>
<div class="abs" style="left:496.0px;top:456px;width:5px;height:1px;background:#222"></div>
<div class="abs" style="left:511.5px;top:456px;width:5px;height:1px;background:#222"></div>
<div class="abs" style="left:339px;top:550px;width:198px;height:1px;background:#d8d8d8"></div>
<div class="abs ui" style="left:346.5px;top:557px;color:#767676;letter-spacing:-0.1px">Filter</div>
<div class="abs" style="left:467px;top:558.5px;width:11px;height:11px;border:1px solid #9a9a9a;border-radius:2px;background:linear-gradient(#f6f6f6,#e0e0e0)"></div>
<div class="abs ui" style="left:485px;top:557px;color:#444;letter-spacing:-0.1px">Show all</div>
<div class="abs" style="left:339px;top:577px;width:198px;height:1px;background:#d8d8d8"></div>
<div class="abs" style="left:339px;top:580px;width:198px;height:16px;background:#f5f5f5"></div>
<svg class="abs" style="left:346px;top:584.5px" width="6" height="7" viewBox="0 0 6 7"><path d="M0 0l5.500 3.500L0 7z" fill="#6e6e6e"/></svg>
<div class="sl" style="left:354px;top:580.5px;color:#c80000">background-co…</div>
<div class="sl" style="left:477px;top:580.5px;color:#222"><span class="sw" style="background:#eff1f2"></span>rgb(2…</div>
<div class="abs" style="left:339px;top:596px;width:198px;height:16px;background:#fff"></div>
<svg class="abs" style="left:346px;top:600.5px" width="6" height="7" viewBox="0 0 6 7"><path d="M0 0l5.500 3.500L0 7z" fill="#6e6e6e"/></svg>
<div class="sl" style="left:354px;top:596.5px;color:#c80000">color</div>
<div class="sl" style="left:477px;top:596.5px;color:#222"><span class="sw" style="background:#555"></span>rgb(8…</div>
<div class="abs" style="left:339px;top:612px;width:198px;height:16px;background:#f5f5f5"></div>
<svg class="abs" style="left:346px;top:616.5px" width="6" height="7" viewBox="0 0 6 7"><path d="M0 0l5.500 3.500L0 7z" fill="#6e6e6e"/></svg>
<div class="sl" style="left:354px;top:612.5px;color:#c80000">direction</div>
<div class="sl" style="left:477px;top:612.5px;color:#222">ltr</div>
<div class="abs" style="left:339px;top:628px;width:198px;height:16px;background:#fff"></div>
<svg class="abs" style="left:346px;top:632.5px" width="6" height="7" viewBox="0 0 6 7"><path d="M0 0l5.500 3.500L0 7z" fill="#6e6e6e"/></svg>
<div class="sl" style="left:354px;top:628.5px;color:#c80000">display</div>
<div class="sl" style="left:477px;top:628.5px;color:#222">block</div>
<div class="abs" style="left:339px;top:644px;width:198px;height:16px;background:#f5f5f5"></div>
<svg class="abs" style="left:346px;top:648.5px" width="6" height="7" viewBox="0 0 6 7"><path d="M0 0l5.500 3.500L0 7z" fill="#6e6e6e"/></svg>
<div class="sl" style="left:354px;top:644.5px;color:#c80000">font-family</div>
<div class="sl" style="left:477px;top:644.5px;color:#222">"Open S…</div>
<div class="abs" style="left:536px;top:360px;width:17px;height:297px;background:#f1f1f1"></div>
<svg class="abs" style="left:540.750px;top:366.600px" width="7.500" height="4.500" viewBox="0 0 9 5"><path d="M0 5L4.500 0 9 5z" fill="#a3a3a3"/></svg>
<div class="abs" style="left:538.5px;top:377px;width:12.500px;height:130px;background:#c1c1c1"></div>
<svg class="abs" style="left:540.750px;top:645.500px" width="7.500" height="4.500" viewBox="0 0 9 5"><path d="M0 0L4.500 5 9 0z" fill="#505050"/></svg>
</div>
</div></div>
<div id="taskbar">
<svg class="abs" style="left:16px;top:12px" width="16" height="16" viewBox="0 0 16 16"><path d="M0 2.300L6.500 1.400v6.100H0zM7.300 1.300L16 0v7.500H7.300zM0 8.300h6.500v6.200L0 13.600zM7.300 8.300H16V16l-8.700-1.300z" fill="#fff"/></svg>
<div class="abs" style="left:48px;top:0;width:320px;height:40px;background:#f2f2f2"></div>
<div class="abs" style="left:57.500px;top:9.500px;width:21px;height:21px;border-radius:11px;border:3px solid #111"></div>
<div class="abs" style="left:88px;top:12px;font-size:15px;line-height:18px;color:#1f1f1f;white-space:nowrap;letter-spacing:-0.25px">Escribe aquí para buscar</div>
<svg class="abs" style="left:341.600px;top:12px" width="12" height="17" viewBox="0 0 12 17"><rect x="2.900" y=".5" width="6.200" height="11" rx="1" fill="none" stroke="#222" stroke-width="1.100"/><path d="M.9 8.200V11.200Q.9 13.800 3.500 13.800H8.500Q11.100 13.800 11.100 11.200V8.200M6 13.800V15.600M3.500 15.700H8.500" fill="none" stroke="#222" stroke-width="1.100" stroke-linecap="round"/></svg>
<svg class="abs" style="left:383px;top:11px" width="19" height="18" viewBox="0 0 19 18"><path d="M2 5.500h9.500v8H2z" fill="none" stroke="#fff" stroke-width="1.200"/><path d="M1.500 3.500V2h10.500v1.500M1.500 15.500V17h10.500v-1.500" fill="none" stroke="#fff" stroke-width="1.200"/><path d="M15.500 1v15" stroke="#fff" stroke-width="1.100"/><path d="M14 5h3v3h-3z" fill="#fff"/></svg>
<div class="abs" style="left:419px;top:0;width:48px;height:40px;background:#44464f"></div>
<div class="abs" style="left:419px;top:37.500px;width:48px;height:2.500px;background:#76b9ed"></div>
<svg class="abs" style="left:431px;top:8px" width="24" height="24" viewBox="0 0 24 24"><circle cx="12" cy="12" r="11.500" fill="#fbc116"/><path d="M12 12L1.300 7.500A11.500 11.500 0 0 1 22.700 7.500z" fill="#dd4b3e"/><path d="M12 .5A11.500 11.500 0 0 1 22.500 7.300H12z" fill="#dd4b3e"/><path d="M12 12L1.400 7.300A11.500 11.500 0 0 0 10.500 23.400L15 15z" fill="#1da260"/><circle cx="12" cy="12" r="5.300" fill="#fff"/><circle cx="12" cy="12" r="4.200" fill="#4c8bf5"/></svg>
<div class="abs" style="left:472px;top:37.500px;width:40px;height:2.500px;background:#76b9ed"></div>
<svg class="abs" style="left:481px;top:8px" width="22" height="24" viewBox="0 0 22 24"><path d="M1 11C2 4.500 6.500 1 11.500 1c6 0 9.500 4.500 9.500 10.500v2.500H7.500c.3 3 2.600 4.800 6 4.800 2.300 0 4.400-.7 6.200-1.800v4.600C17.800 22.700 15.600 23.300 13 23.300 6.500 23.300 2.300 19 2.300 13.500c0-3.500 1.700-6.200 4.500-7.800C5.500 7 4 8.500 1 11zM7.600 10h8c0-2.800-1.500-4.500-4-4.500S7.900 7.300 7.600 10z" fill="#1b84e0"/></svg>
<div class="abs" style="left:521px;top:37.500px;width:40.500px;height:2.500px;background:#76b9ed"></div>
<svg class="abs" style="left:532.500px;top:10px" width="17" height="18.500" viewBox="0 0 18 21"><path d="M9 0C6.500 1.800 3.500 2.600 0 2.600V10c0 5 3.500 9 9 11 5.500-2 9-6 9-11V2.600C14.500 2.600 11.500 1.800 9 0z" fill="#fff"/><path d="M9 0v21M0 9.500h18" stroke="#14151f" stroke-width="1.300"/></svg>
<div class="abs" style="left:570px;top:37.500px;width:40px;height:2.500px;background:#76b9ed"></div>
<div class="abs" style="left:602px;top:37.500px;width:8px;height:2.500px;background:#5f9bcf"></div>
<svg class="abs" style="left:578px;top:9px" width="24" height="22" viewBox="0 0 24 22"><path d="M11 2.500h12v17H11z" fill="#fff" stroke="#2b5db0" stroke-width="1"/><path d="M14.500 6h7M14.500 8.500h7M14.500 11h7M14.500 13.500h7M14.500 16h7" stroke="#2b5db0" stroke-width="1.100"/><path d="M0 2.200L13.500 0v22L0 19.800z" fill="#2b5db0"/><path d="M2.800 7l1.700 8 2.200-7.200 2.200 7.200 1.800-8" fill="none" stroke="#fff" stroke-width="1.500"/></svg>
<!-- tray -->
<svg class="abs" style="left:738px;top:12.500px" width="15.500" height="14.500" viewBox="0 0 17 16"><circle cx="11.500" cy="4" r="3" fill="none" stroke="#fff" stroke-width="1.300"/><circle cx="5" cy="8.500" r="2.600" fill="none" stroke="#fff" stroke-width="1.300"/><path d="M.7 15.500c0-2.800 1.900-4.300 4.300-4.300s4.300 1.500 4.300 4.300M9 8.500c1-.9 1.700-1.200 2.700-1.200 2.500 0 4.300 1.600 4.300 4.200" fill="none" stroke="#fff" stroke-width="1.300"/></svg>
<svg class="abs" style="left:774px;top:17px" width="14" height="8" viewBox="0 0 14 8"><path d="M.7 7.300L7 1l6.300 6.300" fill="none" stroke="#fff" stroke-width="1.300"/></svg>
<svg class="abs" style="left:797px;top:14px" width="17" height="12" viewBox="0 0 17 12"><path d="M5.500 2.500h10v7h-10" fill="none" stroke="#9a9a9a" stroke-width="1"/><path d="M16 4.500v3" stroke="#9a9a9a" stroke-width="1.300"/><path d="M1.500 0v2.500M4.500 0v2.500M.5 2.800h5v2.200a2.500 2.500 0 0 1-5 0zM3 7.500V12" fill="none" stroke="#fff" stroke-width="1"/><path d="M8.500 4l4 4M12.500 4l-4 4" stroke="#fff" stroke-width="1"/></svg>
<svg class="abs" style="left:823px;top:13px" width="15" height="14" viewBox="0 0 15 14"><g fill="none" stroke="#fff" stroke-width="1.200"><path d="M1 13A12 12 0 0 1 13 1" opacity=".95"/><path d="M4 13A9 9 0 0 1 13 4" opacity=".85"/><path d="M7 13A6 6 0 0 1 13 7" opacity=".85"/></g><circle cx="11.500" cy="11.500" r="1.600" fill="#fff"/></svg>
<svg class="abs" style="left:845px;top:13px" width="16" height="14" viewBox="0 0 16 14"><path d="M.6 4.700h2.600L7 1v12L3.200 9.300H.6z" fill="none" stroke="#fff" stroke-width="1.100" stroke-linejoin="round"/><path d="M10 4.500l5 5M15 4.500l-5 5" stroke="#fff" stroke-width="1.100"/></svg>
<div class="abs tb" style="left:873.500px;top:12px;font-size:12px;transform:scaleX(0.77);transform-origin:0 0">ESP</div>
<div class="abs tb" style="left:906px;top:3px;width:60px;text-align:center;letter-spacing:-0.75px">11:46</div>
<div class="abs tb" style="left:906px;top:20.500px;width:60px;text-align:center;letter-spacing:-0.2px">09/04/2019</div>
<svg class="abs" style="left:983px;top:12px" width="17" height="16" viewBox="0 0 17 16"><path d="M.7.700h15.600v11.300H11L8.500 15 6 12H.7z" fill="none" stroke="#fff" stroke-width="1.300" stroke-linejoin="round"/></svg>
</div>
</body>
</html>
